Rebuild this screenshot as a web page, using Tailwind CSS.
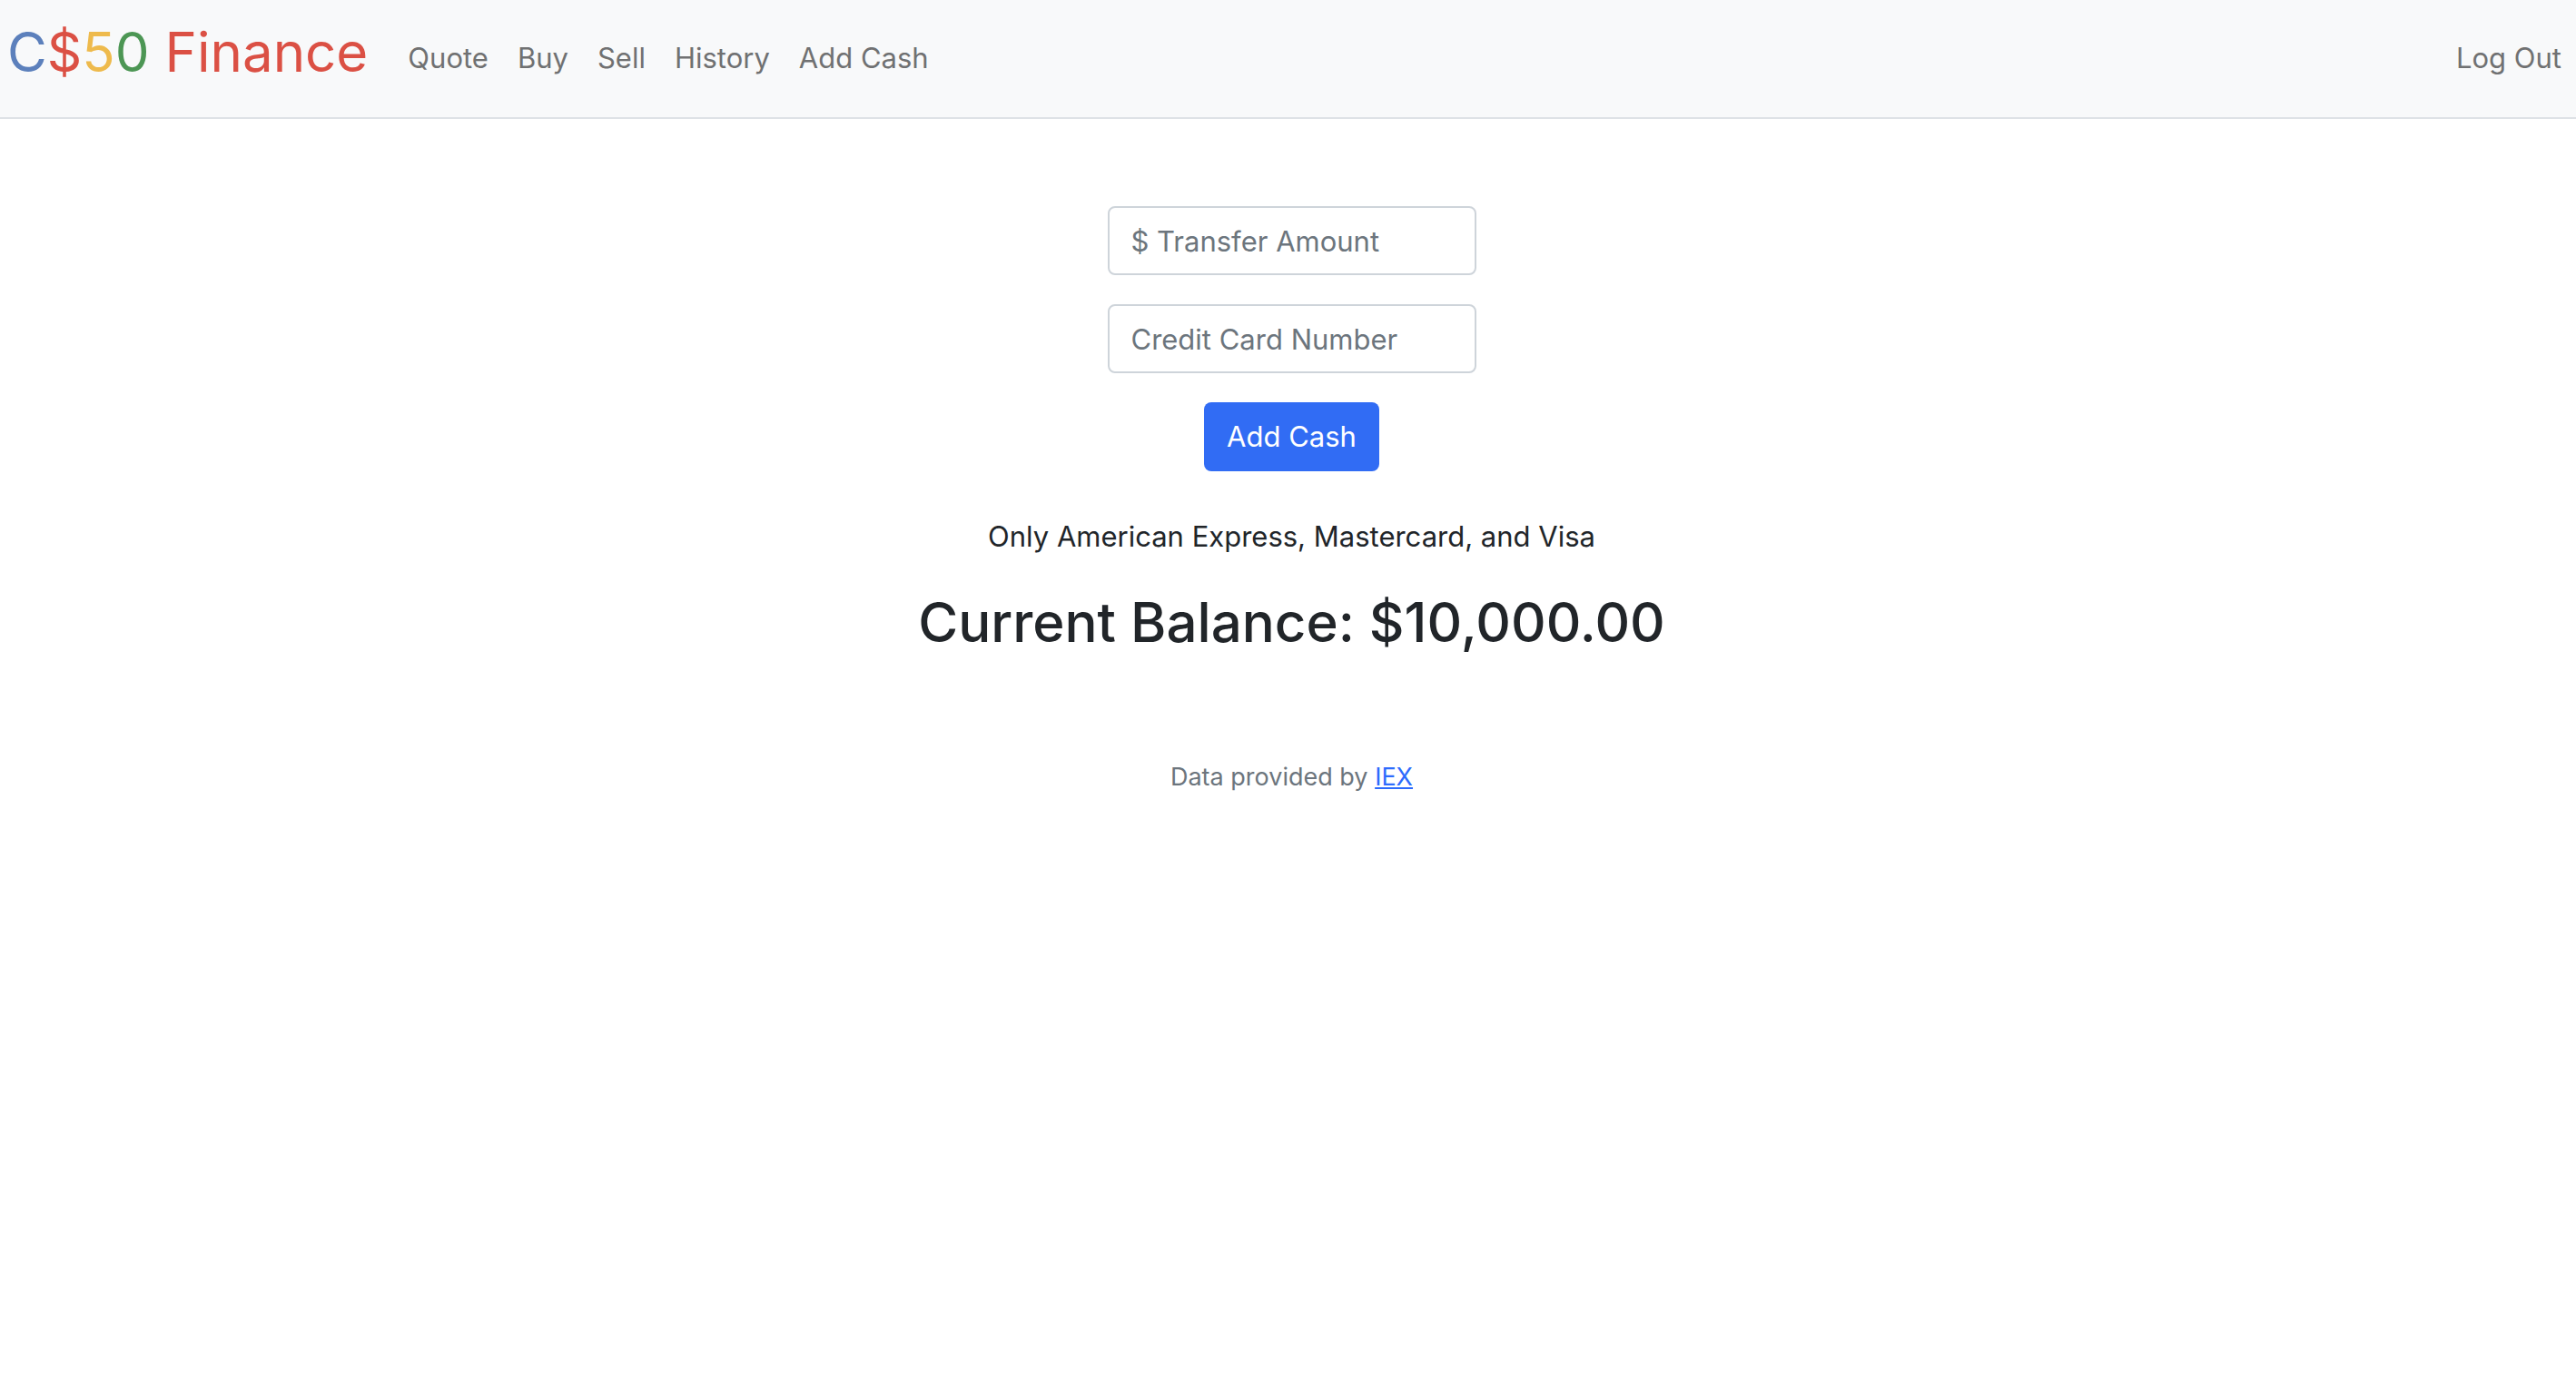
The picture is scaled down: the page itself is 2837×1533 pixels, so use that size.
<!DOCTYPE html>
<html lang="en">
<head>
<meta charset="utf-8">
<meta name="viewport" content="width=device-width, initial-scale=1">
<title>C$50 Finance: Add Cash</title>
<script src="https://cdn.jsdelivr.net/npm/@tailwindcss/browser@4"></script>
</head>
<body class="bg-white font-['Inter',sans-serif] text-[31px] leading-[48px] text-[#212529]">
  <nav class="flex items-start border-b-2 border-[#dee2e6] bg-[#f8f9fa] pt-2 pr-4 pb-[23px] pl-2">
    <a href="#" class="mr-11 text-[60px] leading-[98px] whitespace-nowrap"><span class="text-[#5c80bc]">C</span><span class="text-[#db5044]">$</span><span class="text-[#eeba4c]">5</span><span class="text-[#4c9654]">0</span> <span class="text-[#db5044]">Finance</span></a>
    <ul class="flex grow items-center gap-8 pt-8 text-[#707172]">
      <li><a href="#">Quote</a></li>
      <li><a href="#">Buy</a></li>
      <li><a href="#">Sell</a></li>
      <li><a href="#">History</a></li>
      <li><a href="#">Add Cash</a></li>
      <li class="ml-auto"><a href="#">Log Out</a></li>
    </ul>
  </nav>
  <main class="flex flex-col items-center pt-24 pl-2 text-center">
    <form class="flex flex-col items-center gap-8">
      <input aria-label="Transfer amount" type="text" placeholder="$ Transfer Amount" class="h-[76px] w-[406px] rounded-lg border-2 border-[#ced4da] bg-white px-6 placeholder:text-[#6c757d]">
      <input aria-label="Credit card number" type="text" placeholder="Credit Card Number" class="h-[76px] w-[406px] rounded-lg border-2 border-[#ced4da] bg-white px-6 placeholder:text-[#6c757d]">
      <button type="button" class="h-[76px] rounded-lg bg-[#316cf4] px-[25px] text-white">Add Cash</button>
    </form>
    <p class="mt-12">Only American Express, Mastercard, and Visa</p>
    <h1 class="mt-8 text-[60px] leading-[76px] font-medium">Current Balance: $10,000.00</h1>
  </main>
  <footer class="pt-28 pl-2 text-center text-[27px] leading-[42px] text-[#6c757d]">
    Data provided by <a href="#" class="text-[#2d6bfd] underline">IEX</a>
  </footer>
</body>
</html>
